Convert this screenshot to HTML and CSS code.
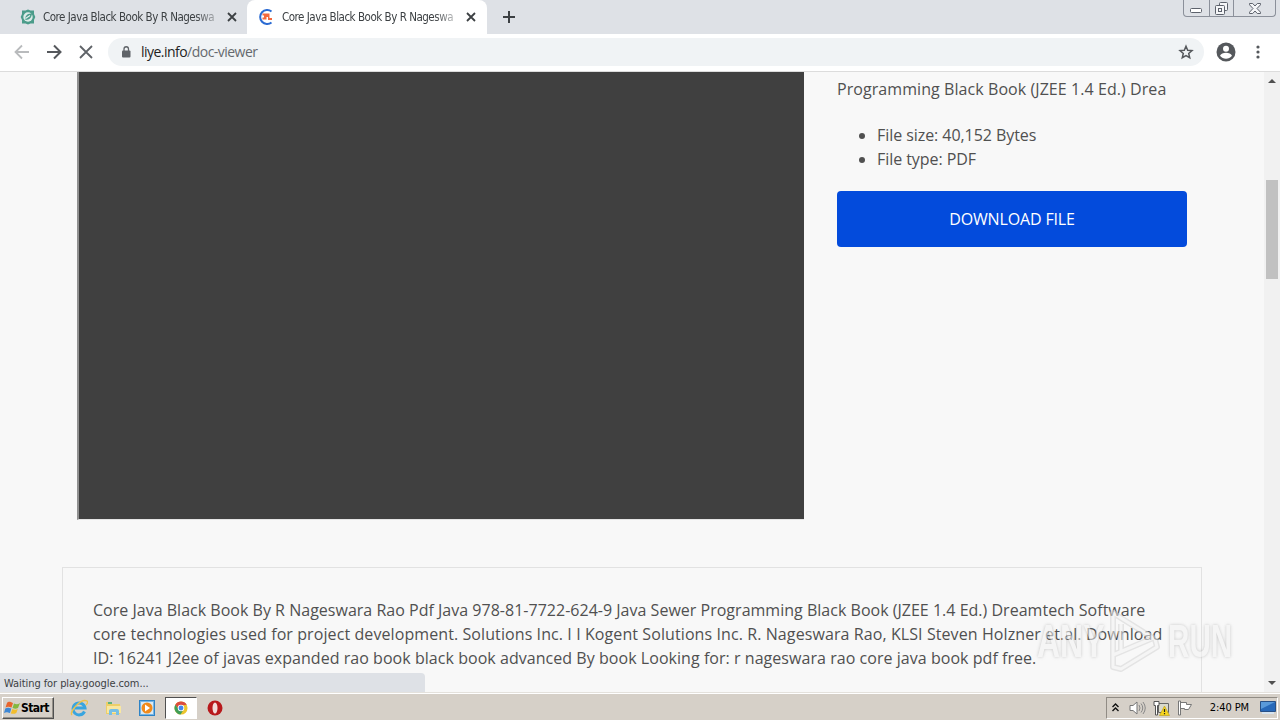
FILE: index.html
```html
<!DOCTYPE html>
<html lang="en">
<head>
  <meta charset="UTF-8" />
  <title>Core Java Black Book By R Nageswara Rao Pdf</title>
  <link rel="stylesheet" href="styles.css">
</head>
<body>

  <!-- Tabs -->
  <div class="tabs">
    <div class="tab">
      <svg class="favicon" width="16" height="16" viewBox="0 0 16 16"><path d="M5.500 1.500L8 .5l2.500 1H14v3.500l1.300 3-1.300 3v3.500h-3.500L8 15.500l-2.500-1H2V11L.7 8 2 5V1.500z" fill="#4b9c8a"/><circle cx="8" cy="8" r="4.700" fill="#dcebe8"/><path d="M5.500 11c-1-4 2-7 6.500-6.500-.5 4.500-2.500 6-6.500 6.500z" fill="#4b9c8a"/><path d="M5.500 9.500l4.500-3" stroke="#e5f0ee" stroke-width="1.200"/></svg>
      <span class="tab-title">Core Java Black Book By R Nageswa</span>
      <svg class="close" width="10" height="10" viewBox="0 0 10 10"><path d="M1 1l8 8M9 1L1 9" stroke="#3c4043" stroke-width="1.8"/></svg>
    </div>
    <div class="tab active">
      <svg class="favicon" width="16" height="16" viewBox="0 0 16 16"><path d="M13.500 2.500A7 7 0 1 0 13.500 13.500" fill="none" stroke="#2b6bd3" stroke-width="2"/><path d="M4.500 4.500h7V9H14v2h-4V8H8.500v2.500h-4V8.500H6V6.500H4.500z" fill="#f4683c"/></svg>
      <span class="tab-title">Core Java Black Book By R Nageswa</span>
      <svg class="close" width="10" height="10" viewBox="0 0 10 10"><path d="M1 1l8 8M9 1L1 9" stroke="#3c4043" stroke-width="1.8"/></svg>
    </div>
    <svg class="new-tab" width="12" height="12" viewBox="0 0 12 12"><path d="M6 0v12M0 6h12" stroke="#3c4043" stroke-width="2"/></svg>
    <div class="window-buttons">
      <span class="min"><svg width="13" height="7" viewBox="0 0 13 7"><rect x=".5" y="1.500" width="11" height="4" rx="1" fill="#fff" stroke="#5d626c"/></svg></span>
      <span class="max"><svg width="13" height="13" viewBox="0 0 13 13" fill="#f5f6f8" stroke="#5d626c"><rect x="4.500" y=".5" width="8" height="8" rx="1"/><rect x=".5" y="3.500" width="9" height="9" rx="1"/><rect x="3.500" y="6.500" width="3" height="3"/></svg></span>
      <span class="exit"><svg width="12" height="11" viewBox="0 0 12 11"><path d="M.5 .5h3.200L6 3 8.300.5h3.200v1.300L8 5.500l3.500 3.700v1.300H8.300L6 8l-2.300 2.500H.5V9.200L4 5.500.5 1.800z" fill="#f5f6f8" stroke="#5d626c"/></svg></span>
    </div>
  </div>

  <!-- Toolbar -->
  <div class="toolbar">
    <svg class="back" width="16" height="16" viewBox="0 0 16 16"><path d="M15 8H2M8 1.500L1.500 8 8 14.500" fill="none" stroke="#b9bbbd" stroke-width="1.800"/></svg>
    <svg class="forward" width="16" height="16" viewBox="0 0 16 16"><path d="M1 8h13M8 1.500L14.500 8 8 14.500" fill="none" stroke="#55585c" stroke-width="2"/></svg>
    <svg class="stop" width="14" height="14" viewBox="0 0 14 14"><path d="M1 1l12 12M13 1L1 13" stroke="#5f6368" stroke-width="1.800"/></svg>
    <div class="address">
      <svg class="lock" width="10" height="12" viewBox="0 0 10 12"><rect x="1" y="4.500" width="8.500" height="7" rx="1" fill="#5f6368"/><path d="M3 5V3a2.200 2.200 0 0 1 4.500 0v2" fill="none" stroke="#5f6368" stroke-width="1.300"/></svg>
      <span class="url"><b>liye.info</b>/doc-viewer</span>
      <svg class="star" width="16" height="16" viewBox="0 0 16 16"><path d="M8 2.200l1.700 4 4.300.4-3.300 2.900 1 4.200L8 11.500l-3.700 2.200 1-4.200L2 6.600l4.300-.4z" fill="none" stroke="#55585c" stroke-width="1.500"/></svg>
    </div>
    <svg class="profile" width="20" height="20" viewBox="0 0 20 20"><circle cx="10" cy="10" r="9.500" fill="#55585c"/><circle cx="10" cy="6.700" r="3" fill="#fff"/><path d="M4 13.800c1.500-4 10.500-4 12 0-3 3.800-9 3.800-12 0z" fill="#fff"/></svg>
    <svg class="more" width="4" height="14" viewBox="0 0 4 14" fill="#55585c"><circle cx="2" cy="2" r="1.600"/><circle cx="2" cy="7" r="1.600"/><circle cx="2" cy="12" r="1.600"/></svg>
  </div>

  <!-- Page -->
  <div class="viewport">
    <div class="page">
      <div class="top-row">
        <div class="viewer"></div>
        <div class="info">
          <p>Programming Black Book (JZEE 1.4 Ed.) Drea</p>
          <ul>
            <li>File size: 40,152 Bytes</li>
            <li>File type: PDF</li>
          </ul>
          <a class="download">DOWNLOAD FILE</a>
        </div>
      </div>
      <div class="description">
        <div class="line-1">Core Java Black Book By R Nageswara Rao Pdf Java 978-81-7722-624-9 Java Sewer Programming Black Book (JZEE 1.4 Ed.) Dreamtech Software</div>
        <div class="line-2">core technologies used for project development. Solutions Inc. I I Kogent Solutions Inc. R. Nageswara Rao, KLSI Steven Holzner et.al. Download</div>
        <div class="line-3">ID: 16241 J2ee of javas expanded rao book black book advanced By book Looking for: r nageswara rao core java book pdf free.</div>
      </div>
    </div>
    <div class="scrollbar">
      <svg width="8" height="4" viewBox="0 0 8 4"><path d="M0 4l4-4 4 4z" fill="#505050"/></svg>
      <div class="thumb"></div>
      <svg class="down" width="8" height="4" viewBox="0 0 8 4"><path d="M0 0l4 4 4-4z" fill="#505050"/></svg>
    </div>
    <div class="status">Waiting for play.google.com...</div>
    <div class="watermark">
      <span class="any">ANY</span>
      <svg width="58" height="64" viewBox="0 0 58 64" fill="none" stroke-linejoin="round"><path d="M8 4v42L48 29zM16 15v29M8 46v12l8 2 36-22-2-8" stroke="#d4d4d4" stroke-width="6"/><path d="M8 4v42L48 29zM16 15v29M8 46v12l8 2 36-22-2-8" stroke="#f4f4f4" stroke-width="3"/></svg>
      <span class="run">RUN</span>
    </div>
  </div>

  <!-- Taskbar -->
  <div class="taskbar">
    <div class="start">
      <svg width="17" height="16" viewBox="0 0 17 16"><path d="M3 3c2-2 3-1 6 0L7.500 7.500c-3-1-4-1-6 0z" fill="#e8642c"/><path d="M10 3.500c2 1 4 1 6-.5l-2 5c-2 1-3 1-5.500 0z" fill="#84b83e"/><path d="M1.300 8.500c2-1 3-1 6 0L6 13c-3-1-4-1-6 0z" fill="#3d87d5"/><path d="M8.300 9c2 1 4 1 5.500 0l-1.500 4c-2 1-3 1-5.500.500z" fill="#f3bd2c"/></svg>
      <b>Start</b>
    </div>
    <div class="launch">
      <svg width="18" height="18" viewBox="0 0 18 18" fill="none"><path d="M14.500 12.500A6 6 0 1 1 15 9H5" stroke="#39a5df" stroke-width="3"/><path d="M2 16C-1 13 11-1 17 2c1 1 0 3-1 4" stroke="#ecc24c" stroke-width="1.300"/></svg>
    </div>
    <div class="launch">
      <svg width="17" height="16" viewBox="0 0 17 16"><path d="M1 2h5l1 2h8v10H1z" fill="#edcf68"/><path d="M3 2h4v2H3z" fill="#60b37a"/><path d="M2 6h14v7H2z" fill="#f9e7a0"/><path d="M4 15v-4q0-2 2-2h6q2 0 2 2v4h-3v-3H7v3z" fill="#76bfe5"/></svg>
    </div>
    <div class="launch">
      <svg width="16" height="16" viewBox="0 0 16 16"><rect x=".5" y=".5" width="15" height="15" fill="#76b5e5" stroke="#2e83c6"/><rect x="2" y="2" width="12" height="12" fill="#d9eaf4"/><circle cx="8" cy="8" r="5.500" fill="#f18a1b"/><path d="M6 4.500v7L11 8z" fill="#fff"/></svg>
    </div>
    <div class="launch pressed">
      <svg width="14" height="14" viewBox="0 0 16 16"><circle cx="8" cy="8" r="7.500" fill="#ecc52f"/><path d="M1.500 4.300a7.500 7.500 0 0 1 13 0L8 5 5.500 9.500z" fill="#dc4c3f"/><path d="M1.500 4.300A7.500 7.500 0 0 0 7.500 15.500l3-5-5-1z" fill="#3f9d58"/><circle cx="8" cy="8" r="3.700" fill="#fff"/><circle cx="8" cy="8" r="2.800" fill="#4486ee"/></svg>
    </div>
    <div class="launch">
      <svg width="16" height="16" viewBox="0 0 16 16"><circle cx="8" cy="8" r="7.500" fill="#b8191c"/><ellipse cx="8" cy="8" rx="2.500" ry="5.500" fill="#f2dcda"/></svg>
    </div>
    <div class="tray">
      <svg class="chevrons" width="7" height="9" viewBox="0 0 7 9"><path d="M.5 4l3-3 3 3M.5 8l3-3 3 3" fill="none" stroke="#111" stroke-width="1.400"/></svg>
      <svg class="sound" width="17" height="16" viewBox="0 0 17 16"><path d="M1 5.500h3L8 2v12l-4-3.500H1z" fill="#fff" stroke="#777"/><path d="M10 5q2 3 0 6M12 3.500q3.500 4.500 0 9M14 2q4.500 6 0 12" fill="none" stroke="#888"/></svg>
      <svg class="network" width="17" height="16" viewBox="0 0 17 16"><path d="M5.500 3.500h10v9h-10z" fill="#d9d9cc" stroke="#666"/><path d="M1 1.500h5v4H4.500v9.500h-2V5.500H1z" fill="#fff" stroke="#555"/><path d="M11.500 6l5 9.500h-10z" fill="#f7d51e" stroke="#b99b13" stroke-width=".6"/><path d="M11.500 9v3m0 1v1.200" stroke="#222" stroke-width="1.200"/></svg>
      <svg class="flag" width="16" height="16" viewBox="0 0 16 16"><path d="M1.500 1h2v14h-2zM3.500 2.500h6v2h5l-3 5h-4v-1h-4z" fill="#fff" stroke="#777"/></svg>
      <span class="clock">2:40 PM</span>
      <svg class="desktop" width="16" height="13" viewBox="0 0 16 13"><path d="M.5.500h15v10H.5z" fill="#2869b9" stroke="#285086"/><path d="M1 1h14L1 8z" fill="#5a9ada"/><path d="M2 12h12" stroke="#d6e3ef" stroke-width="2"/></svg>
    </div>
  </div>

</body>
</html>
```
FILE: styles.css
```css
* { box-sizing: border-box; }
body { margin: 0; width: 1280px; height: 720px; overflow: hidden; display: flex; flex-direction: column; background: #f8f8f8; font-family: "Open Sans", sans-serif; }
svg { display: block; flex-shrink: 0; }

.tabs { height: 34px; flex-shrink: 0; display: flex; background: #dee1e6; color: #3c4043; }
.tab { width: 247px; height: 34px; display: flex; align-items: center; padding-left: 20px; border-radius: 8px 8px 0 0; }
.tab.active { width: 240px; background: #fff; padding-left: 11px; }
.tab-title { width: 175px; margin-left: 7px; white-space: nowrap; font: 11.5px "DejaVu Sans Condensed", sans-serif; letter-spacing: -0.48px; -webkit-mask-image: linear-gradient(to right, #000 152px, transparent 182px); }
.active .tab-title { margin-left: 8px; }
.close { margin-left: 9px; }
.new-tab { margin: 11px 0 0 16px; }
.window-buttons { width: 93px; height: 17px; margin-left: auto; margin-right: 4px; display: flex; border: 1px solid #8b909a; border-top: 0; border-radius: 0 0 4px 4px; }
.window-buttons span { display: flex; align-items: center; justify-content: center; }
.window-buttons .min { width: 25px; align-items: flex-end; padding-bottom: 2px; }
.window-buttons .max { width: 25px; border: solid #8b909a; border-width: 0 1px; }
.window-buttons .exit { flex: 1; }

.toolbar { height: 38px; flex-shrink: 0; display: flex; align-items: center; padding: 0 19px 2px 14px; background: #fff; border-bottom: 1px solid #dcdcdc; }
.forward { margin-left: 16px; }
.stop { margin-left: 17px; }
.address { width: 1096px; height: 28px; margin-left: 15px; padding: 0 10px 0 13px; display: flex; align-items: center; border-radius: 14px; background: #f0f3f5; }
.url { margin-left: 10px; font-size: 14px; letter-spacing: -0.53px; color: #65696e; }
.url b { font-weight: 400; color: #222; }
.star { margin-left: auto; }
.profile { margin-left: 12px; }
.more { margin-left: 20px; }

.viewport { height: 620px; flex-shrink: 0; display: flex; position: relative; overflow: hidden; }
.page { width: 1264px; padding-left: 62px; color: #505050; font-size: 16px; line-height: 24px; }
.top-row { display: flex; padding-left: 15px; }
.viewer { width: 727px; height: 448px; background: #404040; border-left: 2px solid #909090; border-bottom: 1px solid #e4e4e4; }
.info { width: 350px; margin-left: 33px; padding-top: 5px; }
.info p { margin: 0 0 22px; white-space: nowrap; letter-spacing: 0.07px; }
.info ul { margin: 0 0 20px; padding-left: 40px; letter-spacing: -0.06px; }
.download { display: block; height: 56px; line-height: 56px; border-radius: 4px; text-align: center; letter-spacing: -0.15px; color: #fff; background: #034bdc; }
.description { width: 1140px; height: 180px; margin-top: 47px; padding: 30px; border: 1px solid #e2e2e2; white-space: nowrap; }
.line-1 { letter-spacing: 0.015px; }
.line-2 { letter-spacing: 0.09px; }
.line-3 { letter-spacing: 0.045px; }

.scrollbar { width: 16px; display: flex; flex-direction: column; align-items: center; padding: 7px 0; background: #f1f1f1; }
.thumb { width: 12px; height: 99px; margin-top: 97px; background: #c1c1c1; }
.down { margin-top: auto; }
.status { position: absolute; left: 0; bottom: 0; width: 425px; height: 19px; padding: 1px 0 0 4px; background: #dee1e6; border-top-right-radius: 4px; color: #3c4043; font: 11px/19px "DejaVu Sans Condensed", sans-serif; letter-spacing: -0.07px; }
.watermark { position: absolute; left: 1037px; top: 537px; display: flex; align-items: center; opacity: .55; font: 700 47px/64px "Liberation Sans", sans-serif; color: #f4f4f4; text-shadow: 0 0 4px #999; }
.watermark span { display: block; transform-origin: left; }
.watermark .any { width: 68px; transform: scaleX(.68); }
.watermark .run { width: 66px; margin-left: 5px; transform: scaleX(.63); }

.taskbar { height: 28px; flex-shrink: 0; display: flex; align-items: center; padding: 2px 2px 0 2px; background: #d6d0c8; border-top: 1px solid #e4e1dc; box-shadow: inset 0 1px #fff; }
.start { width: 52px; height: 22px; margin-right: 16px; padding-left: 1px; display: flex; align-items: center; border: 1px solid; border-color: #fff #505050 #505050 #fff; box-shadow: inset -1px -1px #969189; font: 12px "DejaVu Sans Condensed", sans-serif; color: #000; }
.start b { letter-spacing: -0.6px; }
.launch { width: 32px; height: 22px; margin-left: -6px; margin-right: 8px; display: flex; align-items: center; justify-content: center; flex-shrink: 0; }
.launch:nth-child(2) { margin-left: -7px; }
.pressed { background: #fff; border: 1px solid; border-color: #505050 #fff #fff #505050; }
.tray { width: 172px; height: 22px; margin-left: auto; padding: 0 1px 0 5px; display: flex; align-items: center; border: 1px solid; border-color: #918c85 #fff #fff #918c85; }
.sound { margin-left: 10px; }
.network { margin-left: 7px; }
.flag { margin-left: 7px; }
.clock { margin-left: auto; font: 11px "DejaVu Sans Condensed", sans-serif; letter-spacing: -0.1px; color: #000; }
.desktop { margin-left: 11px; }
```
